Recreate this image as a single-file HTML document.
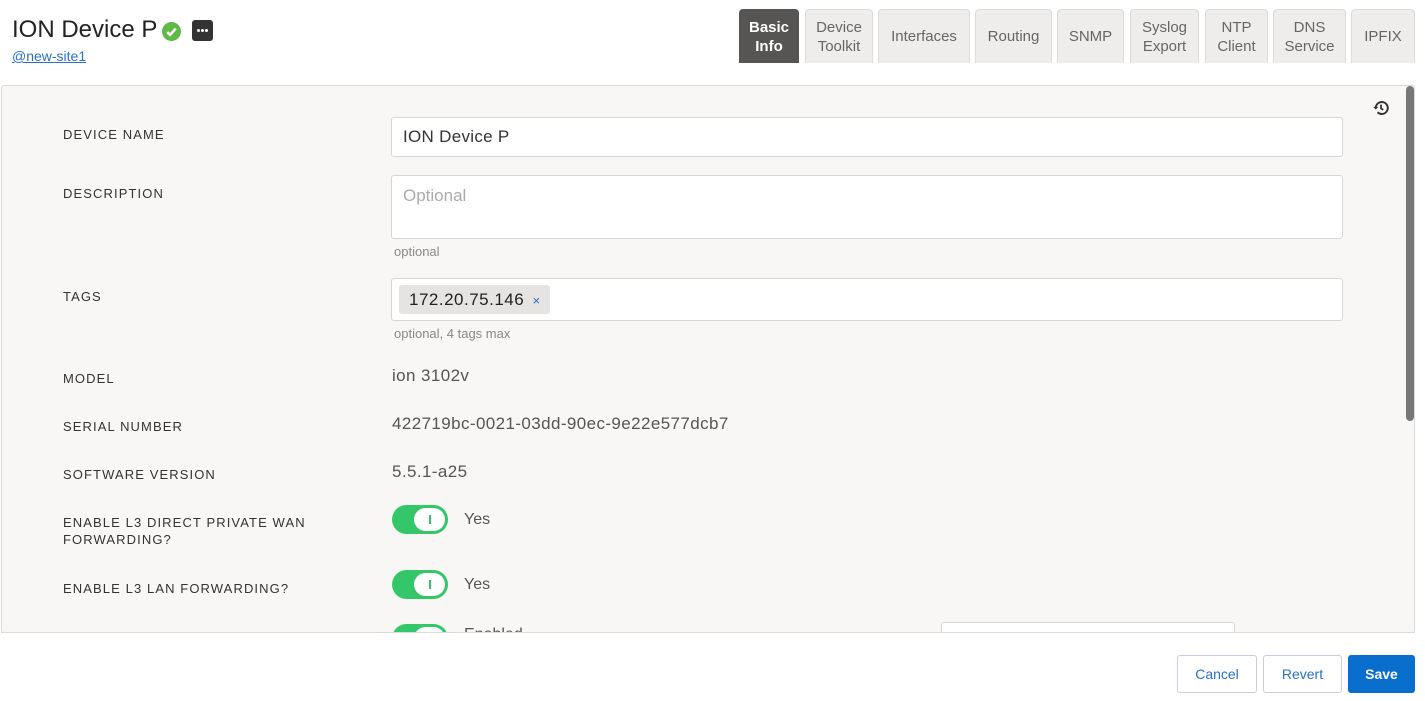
<!DOCTYPE html>
<html><head><meta charset="utf-8"><style>
*{box-sizing:border-box;margin:0;padding:0}
body{width:1425px;height:701px;background:#fff;font-family:"Liberation Sans",sans-serif;color:#333;position:relative;overflow:hidden}
.abs{position:absolute}
.title{left:12px;top:16px;font-size:24px;color:#222}
.site{left:12px;top:48px;font-size:14px;color:#2a6fc9;text-decoration:underline}
.tab{position:absolute;top:9px;height:54px;background:#eeedeb;border:1px solid #dcdad6;border-bottom:none;border-radius:4px 4px 0 0;font-size:15px;color:#666;display:flex;align-items:center;justify-content:center;text-align:center;line-height:19px}
.tab.act{background:#575553;color:#fff;font-weight:bold;border-color:#575553}
.panel{left:1px;top:85px;width:1414px;height:548px;background:#f8f7f5;border:1px solid #dcdad6;border-radius:3px;overflow:hidden}
.lbl{position:absolute;left:63px;font-size:13px;letter-spacing:1.1px;color:#333;line-height:17px}
.inp{position:absolute;left:391px;width:952px;background:#fff;border:1px solid #d8d6d2;border-radius:3px}
.hint{position:absolute;left:394px;font-size:13px;color:#888}
.val{position:absolute;left:392px;font-size:17px;letter-spacing:0.4px;color:#555}
.tog{position:absolute;left:392px;width:56px;height:29px;border-radius:15px;background:#33c76a}
.tog::after{content:"";position:absolute;left:22px;top:3px;width:31px;height:23px;border-radius:12px;background:#fff}
.tog::before{content:"";position:absolute;left:37px;top:10px;width:2px;height:9px;background:#33c76a;z-index:2}
.yes{position:absolute;left:464px;font-size:16px;color:#555}
.btn{position:absolute;top:655px;height:38px;border:1px solid #ccd;border-radius:3px;background:#fff;color:#2a6fc9;font-size:14px;display:flex;align-items:center;justify-content:center}
</style></head><body>
<div class="abs title">ION Device P</div>
<svg class="abs" style="left:162px;top:22px" width="19" height="19" viewBox="0 0 20 20"><circle cx="10" cy="10" r="10" fill="#5fb847"/><path d="M5.5 10.5l3 3 6-6.5" stroke="#fff" stroke-width="2.6" fill="none"/></svg>
<div class="abs" style="left:192px;top:20px;width:21px;height:21px;background:#333;border-radius:3px"><div style="position:absolute;left:5px;top:9px;width:3px;height:3px;background:#fff;border-radius:50%;box-shadow:4px 0 #fff,8px 0 #fff"></div></div>
<div class="abs site">@new-site1</div>

<div class="tab act" style="left:739px;width:60px">Basic<br>Info</div>
<div class="tab" style="left:805px;width:68px">Device<br>Toolkit</div>
<div class="tab" style="left:878px;width:92px">Interfaces</div>
<div class="tab" style="left:975px;width:77px">Routing</div>
<div class="tab" style="left:1057px;width:67px">SNMP</div>
<div class="tab" style="left:1130px;width:69px">Syslog<br>Export</div>
<div class="tab" style="left:1205px;width:63px">NTP<br>Client</div>
<div class="tab" style="left:1273px;width:73px">DNS<br>Service</div>
<div class="tab" style="left:1351px;width:64px">IPFIX</div>

<div class="abs panel">
<svg class="abs" style="left:1370px;top:13px" width="18" height="18" viewBox="0 0 24 24"><path d="M5 12a8 8 0 1 1 2.4 5.7" stroke="#333" stroke-width="2.6" fill="none"/><path d="M1.5 10.5l3.5 3.5 3.5-3.5z" fill="#333"/><path d="M12 7.5v5l3 2" stroke="#333" stroke-width="2.4" fill="none"/></svg>
<div class="abs" style="left:1404px;top:0;width:8px;height:335px;background:#777;border-radius:4px"></div>
</div>
<div class="lbl" style="top:126px">DEVICE NAME</div>
<div class="inp" style="top:117px;height:40px"><span style="position:absolute;left:11px;top:9px;font-size:17px;letter-spacing:0.3px;color:#333">ION Device P</span></div>
<div class="lbl" style="top:185px">DESCRIPTION</div>
<div class="inp" style="top:175px;height:64px"><span style="position:absolute;left:11px;top:10px;font-size:17px;color:#aaa">Optional</span></div>
<div class="hint" style="top:244px">optional</div>
<div class="lbl" style="top:288px">TAGS</div>
<div class="inp" style="top:278px;height:43px"><span style="position:absolute;left:7px;top:6px;height:29px;padding:0 9px 0 10px;background:#e5e4e2;border-radius:3px;font-size:17px;letter-spacing:0.5px;line-height:29px;color:#222">172.20.75.146 <span style="font-size:13px;color:#2a6fc9;margin-left:3px">×</span></span></div>
<div class="hint" style="top:326px">optional, 4 tags max</div>
<div class="lbl" style="top:370px">MODEL</div>
<div class="val" style="top:366px">ion 3102v</div>
<div class="lbl" style="top:418px">SERIAL NUMBER</div>
<div class="val" style="top:414px">422719bc-0021-03dd-90ec-9e22e577dcb7</div>
<div class="lbl" style="top:466px">SOFTWARE VERSION</div>
<div class="val" style="top:462px">5.5.1-a25</div>
<div class="lbl" style="top:514px">ENABLE L3 DIRECT PRIVATE WAN<br>FORWARDING?</div>
<div class="tog" style="top:505px"></div><div class="yes" style="top:511px">Yes</div>
<div class="lbl" style="top:580px">ENABLE L3 LAN FORWARDING?</div>
<div class="tog" style="top:570px"></div><div class="yes" style="top:576px">Yes</div>
<div class="abs" style="left:0;top:620px;width:1425px;height:13px;overflow:hidden">
<div class="tog" style="top:4px"></div><div class="yes" style="top:6px">Enabled</div>
<div class="abs" style="left:941px;top:2px;width:294px;height:20px;background:#fff;border:1px solid #d8d6d2;border-radius:3px"></div>
</div>
<div class="abs" style="left:1px;top:632px;width:1414px;height:1px;background:#dcdad6"></div>

<div class="btn" style="left:1177px;width:80px">Cancel</div>
<div class="btn" style="left:1263px;width:79px">Revert</div>
<div class="btn" style="left:1348px;width:67px;background:#0a6ecc;border-color:#0a6ecc;color:#fff;font-weight:bold">Save</div>
</body></html>
